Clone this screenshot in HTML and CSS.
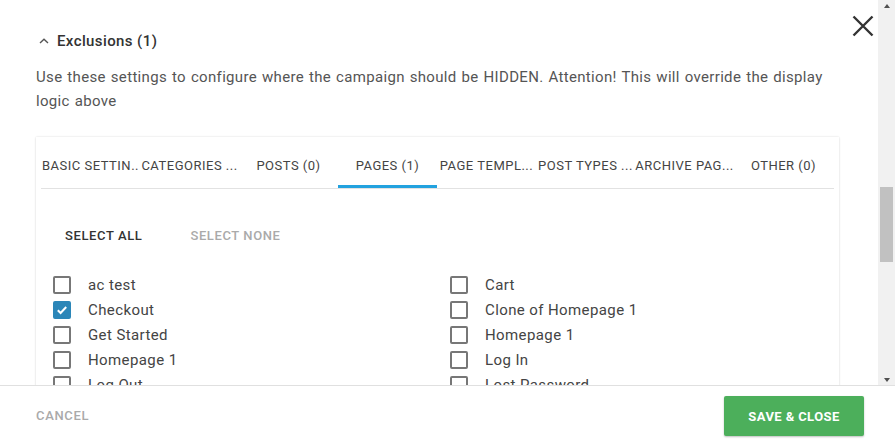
FILE: index.html
```html
<!DOCTYPE html>
<html>
<head>
<meta charset="utf-8">
<link rel="stylesheet" href="styles.css">
</head>
<body>
<div class="modal">
  <div class="scroll-area">
    <div class="content">
      <div class="section-head">
        <svg class="chevron" width="10" height="6" viewBox="0 0 10 6"><path d="M1 5 L5 1.2 L9 5" fill="none" stroke="#555" stroke-width="1.4"/></svg>
        <span>Exclusions (1)</span>
      </div>
      <p class="desc">Use these settings to configure where the campaign should be HIDDEN. Attention! This will override the display logic above</p>
      <div class="card">
        <div class="tabs">
          <div class="tab">BASIC SETTIN..</div>
          <div class="tab">CATEGORIES ...</div>
          <div class="tab">POSTS (0)</div>
          <div class="tab active">PAGES (1)</div>
          <div class="tab">PAGE TEMPL...</div>
          <div class="tab">POST TYPES ...</div>
          <div class="tab">ARCHIVE PAG...</div>
          <div class="tab">OTHER (0)</div>
        </div>
        <div class="actions">
          <button class="link-btn">SELECT ALL</button>
          <button class="link-btn muted">SELECT NONE</button>
        </div>
        <div class="checklist">
          <label class="item"><span class="box"></span>ac test</label>
          <label class="item"><span class="box"></span>Cart</label>
          <label class="item"><span class="box checked"><svg width="12" height="10" viewBox="0 0 12 10"><path d="M1.8 5.2 L4.6 8 L10.2 2" fill="none" stroke="#fff" stroke-width="2"/></svg></span>Checkout</label>
          <label class="item"><span class="box"></span>Clone of Homepage 1</label>
          <label class="item"><span class="box"></span>Get Started</label>
          <label class="item"><span class="box"></span>Homepage 1</label>
          <label class="item"><span class="box"></span>Homepage 1</label>
          <label class="item"><span class="box"></span>Log In</label>
          <label class="item"><span class="box"></span>Log Out</label>
          <label class="item"><span class="box"></span>Lost Password</label>
        </div>
      </div>
    </div>
    <div class="scrollbar">
      <div class="arrow up"></div>
      <div class="track"><div class="thumb"></div></div>
      <div class="arrow down"></div>
    </div>
  </div>
  <div class="footer">
    <button class="cancel">CANCEL</button>
    <button class="save">SAVE &amp; CLOSE</button>
  </div>
  <button class="close" aria-label="Close">
    <svg width="22" height="22" viewBox="0 0 22 22"><path d="M1.5 1.5 L20.5 20.5 M20.5 1.5 L1.5 20.5" stroke="#333" stroke-width="2.4" fill="none"/></svg>
  </button>
</div>
</body>
</html>
```
FILE: styles.css
```css
* { box-sizing: border-box; }
html, body { margin: 0; padding: 0; background: #fff; }
body {
  font-family: Roboto, "Liberation Sans", sans-serif;
  color: #444;
  width: 895px;
  height: 445px;
  overflow: hidden;
}
.modal {
  position: relative;
  width: 895px;
  height: 445px;
  display: flex;
  flex-direction: column;
}
.scroll-area {
  height: 385px;
  display: flex;
  overflow: hidden;
}
.content {
  flex: 1;
  padding: 29px 39px 0 36px;
  overflow: hidden;
}
.section-head {
  display: flex;
  align-items: center;
  height: 24px;
  font-size: 15px;
  font-weight: 500;
  letter-spacing: 0.4px;
  color: #333;
}
.chevron { margin: 0 8px 1px 3px; }
.desc {
  margin: 12px 0 0;
  font-size: 15px;
  line-height: 24px;
  letter-spacing: 0.33px;
  word-spacing: 0.9px;
  color: #555;
}
.card {
  margin-top: 24px;
  background: #fff;
  box-shadow: 0 0 2px rgba(0,0,0,0.14), 0 1px 2px rgba(0,0,0,0.06);
  padding: 0 5px;
  height: 400px;
}
.tabs {
  display: flex;
  border-bottom: 1px solid #e2e2e2;
}
.tab {
  position: relative;
  width: 99px;
  flex: none;
  padding-top: 6px;
  line-height: 45px;
  font-size: 13px;
  letter-spacing: 0.5px;
  color: #444;
  text-align: center;
  white-space: nowrap;
  overflow: hidden;
}
.tab.active::after {
  content: "";
  position: absolute;
  left: 0; right: 0; bottom: 0;
  height: 3px;
  background: #22a2df;
}
.actions {
  display: flex;
  gap: 16px;
  margin: 29px 0 0 8px;
}
.link-btn {
  border: 0;
  background: none;
  font-family: inherit;
  font-size: 13px;
  font-weight: 500;
  letter-spacing: 0.6px;
  color: #333;
  padding: 0 16px;
  height: 36px;
  line-height: 36px;
}
.link-btn.muted { color: #aaa; }
.checklist {
  display: grid;
  grid-template-columns: 397px 397px;
  margin: 18px 0 0 12px;
}
.item {
  display: flex;
  align-items: center;
  height: 25px;
  font-size: 15px;
  letter-spacing: 0.4px;
  color: #444;
}
.box {
  width: 18px;
  height: 18px;
  border: 2px solid #777;
  border-radius: 2px;
  margin-right: 17px;
  flex: none;
  display: flex;
  align-items: center;
  justify-content: center;
}
.box.checked {
  background: #2b86b8;
  border-color: #2b86b8;
}
.scrollbar {
  width: 17px;
  flex: none;
  background: #f1f1f1;
  display: flex;
  flex-direction: column;
  align-items: center;
}
.arrow {
  height: 17px;
  width: 17px;
  display: flex;
  align-items: center;
  justify-content: center;
}
.arrow::before {
  content: "";
  border-left: 3.5px solid transparent;
  border-right: 3.5px solid transparent;
}
.arrow.up::before { border-bottom: 4px solid #505050; margin-top: -6px; }
.arrow.down::before { border-top: 4px solid #505050; margin-top: 6px; }
.track { flex: 1; width: 17px; padding-top: 170px; }
.thumb {
  width: 13px;
  height: 75px;
  margin-left: 2px;
  background: #c1c1c1;
}
.footer {
  height: 60px;
  border-top: 1px solid #e0e0e0;
  display: flex;
  align-items: center;
  justify-content: space-between;
  padding: 0 31px 0 36px;
}
.cancel {
  border: 0;
  background: none;
  padding: 0;
  font-family: inherit;
  font-size: 13px;
  font-weight: 500;
  letter-spacing: 0.65px;
  color: #aaa;
}
.save {
  border: 0;
  border-radius: 2px;
  background: #4caf5b;
  color: #fff;
  font-family: inherit;
  font-size: 13px;
  font-weight: 700;
  letter-spacing: 0.4px;
  width: 140px;
  height: 40px;
  box-shadow: 0 1px 2px rgba(0,0,0,0.25);
  margin-top: 1px;
}
.close {
  position: absolute;
  top: 15px;
  left: 852px;
  border: 0;
  background: none;
  padding: 0;
  width: 22px;
  height: 22px;
}
```
